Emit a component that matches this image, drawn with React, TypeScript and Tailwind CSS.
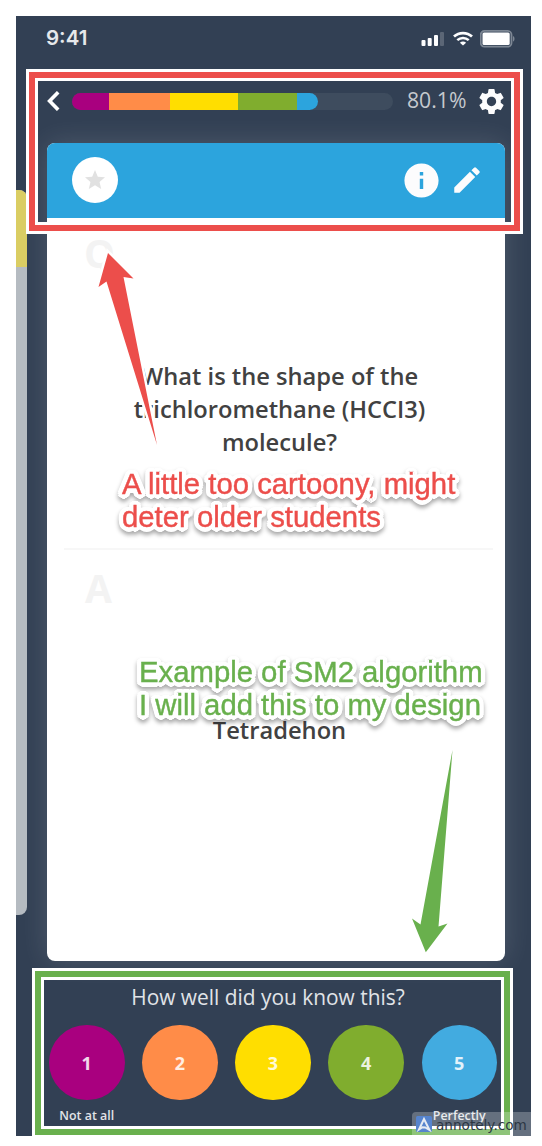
import React from "react";
import { MdEdit, MdInfo, MdSettings, MdStar } from "react-icons/md";

const segments = [
  "w-[37px] bg-[#a9007f]",
  "w-[61px] bg-[#ff8c48]",
  "w-[68px] bg-[#ffde00]",
  "w-[59px] bg-[#80ad2e]",
  "w-[21px] bg-[#2ca4dd] rounded-r-full",
];

const ratings = [
  { value: 1, color: "bg-[#a9007f]", label: "Not at all" },
  { value: 2, color: "bg-[#ff8c48]", label: "" },
  { value: 3, color: "bg-[#ffde00]", label: "" },
  { value: 4, color: "bg-[#80ad2e]", label: "" },
  { value: 5, color: "bg-[#42abe0]", label: "Perfectly" },
];

function StatusBar() {
  return (
    <div className="flex h-[53px] items-start justify-between pl-[30px] pr-[15px] pt-[9px]">
      <span className="font-['Inter',sans-serif] text-[20.5px] font-semibold leading-[26px] text-[#e6e8eb]">
        9:41
      </span>
      <div className="flex items-center pt-[5px]">
        <svg width="24" height="16" viewBox="0 0 24 16" fill="#fdfdfe">
          <rect x="0.5" y="9" width="4" height="6" rx="1" />
          <rect x="6.7" y="7" width="4" height="8" rx="1" />
          <rect x="13" y="4" width="4" height="11" rx="1" />
          <rect x="19" y="1" width="4" height="14" rx="1" opacity="0.2" />
        </svg>
        <svg className="ml-2" width="20" height="16" viewBox="0 0 20 16" fill="none" stroke="#fdfdfe">
          <path d="M1 5.6C6 0.9 14 0.9 19 5.6" strokeWidth="2.7" />
          <path d="M4.3 9.2C7.5 6.2 12.5 6.2 15.7 9.2" strokeWidth="2.5" />
          <path d="M10 14.6L6.9 11.7C8.7 10.1 11.3 10.1 13.1 11.7Z" fill="#fdfdfe" stroke="none" />
        </svg>
        <svg className="ml-[7px]" width="36" height="18" viewBox="0 0 36 18">
          <rect x="0.7" y="0.9" width="30.8" height="15.8" rx="3.8" fill="none" stroke="#7d8794" strokeWidth="1.8" />
          <rect x="2.5" y="2.6" width="27.2" height="12.3" rx="1.5" fill="#fff" />
          <path d="M33 6v5.6c2-0.7 2-4.9 0-5.6z" fill="#7d8794" />
        </svg>
      </div>
    </div>
  );
}

function ProgressHeader() {
  return (
    <div className="flex h-[64px] items-center pl-[31px]">
      <svg width="13" height="20" viewBox="0 0 13 20" className="shrink-0">
        <path d="M11.2 1.2L2.6 10L11.2 18.8" fill="none" stroke="#fff" strokeWidth="3.6" />
      </svg>
      <div className="ml-3 flex h-[17px] w-[321px] shrink-0 overflow-hidden rounded-full bg-[#3e4c5e]">
        {segments.map((s) => (
          <div key={s} className={s} />
        ))}
      </div>
      <span className="ml-[14px] w-[69px] whitespace-nowrap pb-0.5 font-['Open_Sans',sans-serif] text-[21.2px] text-[#c5c9ce]">
        80.1%
      </span>
      <MdSettings className="shrink-0" size={31} color="#fcfcfd" />
    </div>
  );
}

function Flashcard() {
  return (
    <section className="flex h-[818px] w-[458px] flex-col overflow-hidden rounded-lg bg-white shadow-[0_0_28px_rgba(255,255,255,0.14)]">
      <header className="flex h-[75px] shrink-0 items-center bg-[#2ca4dd] pl-[25px] pr-[21px]">
        <div className="flex size-[46px] items-center justify-center rounded-full bg-white">
          <MdStar size={24} color="#e1e1e1" />
        </div>
        <MdInfo className="ml-auto" size={41} color="#fcfcfd" />
        <MdEdit className="ml-[8px]" size={34} color="#fcfcfd" />
      </header>
      <div className="h-[330px] pl-[17px] pr-3 pt-[11px]">
        <div className="pl-5 font-['Open_Sans',sans-serif] text-[39px] font-bold leading-[48px] text-[#f3f3f3]">Q</div>
        <p className="mt-[83px] pl-0.5 text-center font-['Open_Sans',sans-serif] text-[23.7px] font-semibold leading-[33px] text-[#414141]">
          What is the shape of the
          <br />
          trichloromethane (HCCI3)
          <br />
          molecule?
        </p>
      </div>
      <div className="ml-[17px] mr-3 grow border-t-2 border-[#f7f7f7] pt-[14px]">
        <div className="pl-[21px] font-['Open_Sans',sans-serif] text-[39px] font-bold leading-[48px] text-[#f3f3f3]">A</div>
        <p className="mt-[102px] pl-0.5 text-center font-['Open_Sans',sans-serif] text-[23.7px] font-semibold leading-[33px] text-[#414141]">
          Tetradehon
        </p>
      </div>
    </section>
  );
}

function Rating() {
  return (
    <div className="mt-[20.500px] pl-[33px]">
      <h2 className="w-[438px] text-center font-['Open_Sans',sans-serif] text-[20.9px] font-normal leading-[30px] text-[#e1e4e8]">
        How well did you know this?
      </h2>
      <div className="mt-[13px] flex w-[448px] justify-between">
        {ratings.map((r) => (
          <div key={r.value} className="flex w-[75.5px] flex-col items-center font-['Open_Sans',sans-serif]">
            <div
              className={`flex h-[75.5px] w-[75.5px] items-center justify-center rounded-full pt-0.5 text-[18px] font-bold text-white/85 ${r.color}`}
            >
              {r.value}
            </div>
            <span className="mt-[7px] whitespace-nowrap text-[12.400px] font-semibold leading-[18px] text-[#e1e4e8]">
              {r.label}
            </span>
          </div>
        ))}
      </div>
    </div>
  );
}

const noteStyle =
  "absolute whitespace-nowrap font-['Liberation_Sans',sans-serif] text-[29.3px] leading-[33px] [-webkit-text-stroke:0.4px_currentColor] [text-shadow:4.500px_0_#fff,4.200px_1.700px_#fff,3.200px_3.200px_#fff,1.700px_4.200px_#fff,0_4.500px_#fff,-1.700px_4.200px_#fff,-3.200px_3.200px_#fff,-4.200px_1.700px_#fff,-4.500px_0_#fff,-4.200px_-1.700px_#fff,-3.200px_-3.200px_#fff,-1.700px_-4.200px_#fff,0_-4.500px_#fff,1.700px_-4.200px_#fff,3.200px_-3.200px_#fff,4.200px_-1.700px_#fff,2px_0_#fff,-2px_0_#fff,0_2px_#fff,0_-2px_#fff] [filter:drop-shadow(0_3px_2px_rgba(0,0,0,0.34))]";

function Annotations() {
  return (
    <>
      <div className="absolute left-[26px] top-[69px] h-[165px] w-[497px] border-[3px] border-white">
        <div className="h-full border-[6px] border-[#ec4e4b]">
          <div className="h-full border-[3px] border-white" />
        </div>
      </div>
      <div className="absolute left-[32px] top-[968px] h-[170px] w-[481px] border-[3px] border-white">
        <div className="h-full border-[6px] border-[#69b04d]">
          <div className="h-full border-[3px] border-white" />
        </div>
      </div>
      <svg className="absolute left-0 top-0" width="542" height="1146" viewBox="0 0 542 1146">
        <path
          d="M108 253L133.500 278.500L123.500 277L157 445L106.500 281.500L98.500 287Z"
          fill="#ec4e4b"
          stroke="#fff"
          strokeWidth="5"
          paintOrder="stroke"
        />
        <path d="M452.500 750L438.500 926.500L447.500 923.500L425.800 952.200L412 918.500L420.500 924.500Z" fill="#69b04d" />
      </svg>
      <p className={`left-[122px] top-[467px] text-[#ec4e4b] ${noteStyle}`}>
        A little too cartoony, might
        <br />
        deter older students
      </p>
      <p className={`left-[139px] top-[655px] text-[#69b04d] ${noteStyle}`}>
        Example of SM2 algorithm
        <br />
        I will add this to my design
      </p>
      <div className="absolute left-[412px] top-[1112px] flex h-[24px] w-[119px] items-center rounded-tl bg-white/25 pl-1">
        <svg width="16" height="16" viewBox="0 0 16 16" className="shrink-0">
          <rect width="16" height="16" rx="1.500" fill="#5684cd" />
          <path d="M3 13.500L8 3L13.500 14L9.200 11.500L6.500 11.200Z" fill="none" stroke="#e5ebf3" strokeWidth="2" />
        </svg>
        <span className="ml-1 pt-px font-['DejaVu_Sans',sans-serif] text-[13.600px] leading-[20px] text-[#2c3744]">
          annotely.com
        </span>
      </div>
    </>
  );
}

export default function App() {
  return (
    <main className="relative h-[1146px] w-[542px] overflow-hidden bg-white pl-4 pt-4">
      <div className="flex h-[1120px] w-[515px] flex-col overflow-hidden bg-[#324054]">
        <StatusBar />
        <ProgressHeader />
        <div className="mt-[-6px] flex h-[834px] items-start gap-5">
          <div className="mt-[63px] h-[725px] w-[11px] shrink-0 overflow-hidden rounded-r-lg bg-[#b5bbc1]">
            <div className="h-[77px] bg-[#dacd63]" />
          </div>
          <div className="mt-[15.500px]">
            <Flashcard />
          </div>
        </div>
        <Rating />
      </div>
      <Annotations />
    </main>
  );
}
